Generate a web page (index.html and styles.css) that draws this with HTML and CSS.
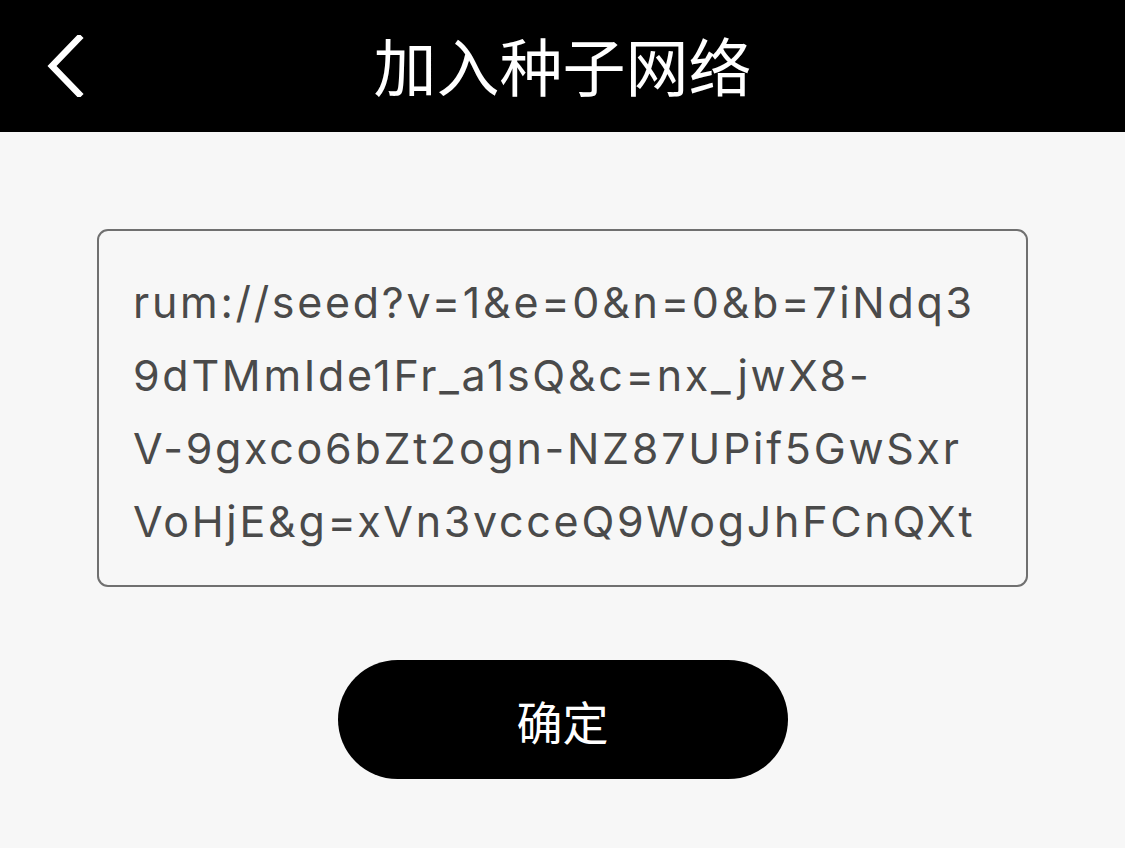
FILE: index.html
```html
<!DOCTYPE html>
<html lang="zh-CN">
<head>
<meta charset="utf-8">
<title>加入种子网络</title>
<link rel="stylesheet" href="styles.css">
</head>
<body>
<header class="nav">
  <button class="back" aria-label="返回">
    <svg width="40" height="62" viewBox="0 0 40 62"><path d="M35 3 L8 31 L35 59" fill="none" stroke="#fff" stroke-width="6.5" stroke-linecap="square"/></svg>
  </button>
  <h1 class="title">加入种子网络</h1>
</header>
<main class="content">
  <div class="seed-box">
    <span class="line">rum://seed?v=1&amp;e=0&amp;n=0&amp;b=7iNdq3</span>
    <span class="line">9dTMmIde1Fr_a1sQ&amp;c=nx_jwX8-</span>
    <span class="line">V-9gxco6bZt2ogn-NZ87UPif5GwSxr</span>
    <span class="line">VoHjE&amp;g=xVn3vcceQ9WogJhFCnQXt</span>
  </div>
  <button class="confirm">确定</button>
</main>
</body>
</html>
```
FILE: styles.css
```css
* { box-sizing: border-box; }
html, body { margin: 0; padding: 0; }
body {
  width: 1125px;
  height: 848px;
  background: #f7f7f7;
  font-family: "Inter", "Noto Sans CJK SC", sans-serif;
  overflow: hidden;
}
.nav {
  height: 132px;
  background: #000;
  display: flex;
  align-items: center;
  justify-content: center;
  position: relative;
}
.back {
  position: absolute;
  left: 44px;
  top: 35px;
  background: none;
  border: 0;
  padding: 0;
  width: 40px;
  height: 62px;
  display: flex;
}
.title {
  margin: 0 0 6px;
  color: #fff;
  font-family: "Noto Sans CJK SC", sans-serif;
  font-weight: 400;
  font-size: 63px;
  line-height: 1;
  letter-spacing: 0;
}
.content {
  display: flex;
  flex-direction: column;
  align-items: center;
  padding-top: 97px;
}
.seed-box {
  width: 931px;
  height: 358px;
  border: 2px solid #707070;
  border-radius: 11px;
  padding: 35px 0 0 34px;
  display: flex;
  flex-direction: column;
  color: #4a4a4a;
  font-size: 43px;
  line-height: 73px;
  letter-spacing: 2.7px;
}
.line { display: block; white-space: nowrap; }
.confirm {
  margin-top: 73px;
  width: 450px;
  height: 119px;
  border: 0;
  border-radius: 60px;
  background: #000;
  color: #fff;
  font-family: "Noto Sans CJK SC", sans-serif;
  font-size: 46px;
  padding: 0;
}
```
